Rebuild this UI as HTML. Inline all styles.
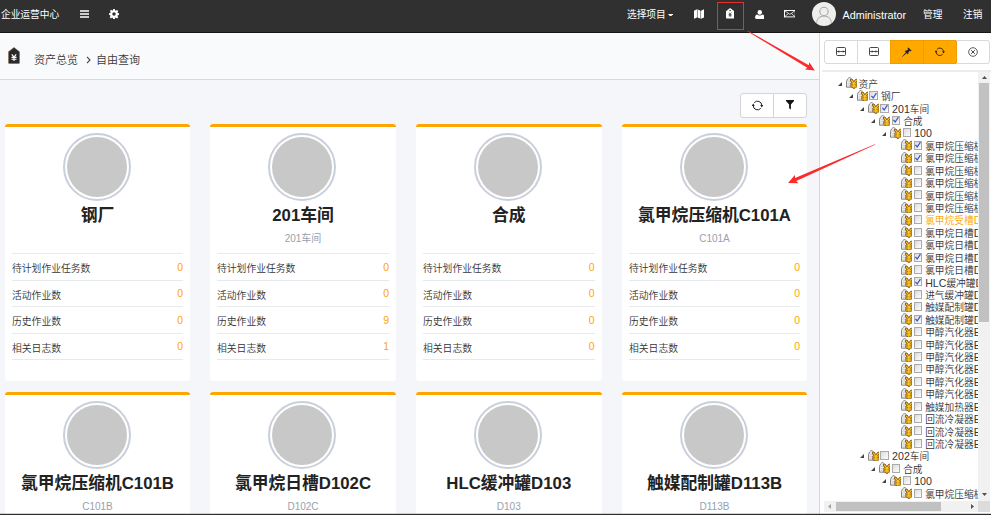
<!DOCTYPE html>
<html lang="zh-CN"><head><meta charset="utf-8"><title>企业运营中心</title><style>
*{box-sizing:border-box;margin:0;padding:0}
html,body{width:991px;height:515px;overflow:hidden;background:#f4f6fa;font-family:"Liberation Sans","Noto Sans CJK SC",sans-serif;color:#333}
body{position:relative}
.abs{position:absolute}
#nav{position:absolute;z-index:5;left:0;top:0;width:991px;height:33px;border-bottom:1px solid #161616;background:#303030;color:#fff;font-size:9.7px}
#nav .t{position:absolute;top:0.5px;height:28px;line-height:28px;white-space:nowrap}
#nav svg{position:absolute}
#hdr{position:absolute;left:0;top:32px;width:820px;height:48px;background:#f9fafc;border-bottom:1px solid #d6d8dc}
#hdr .bc{position:absolute;top:1px;height:54px;line-height:54px;font-size:11px;font-weight:350;color:#3a3a3a;white-space:nowrap}
.card{position:absolute;width:185.3px;height:257px;background:#fff;border-top:3px solid #ffa500;border-radius:3px}
.card .ring{position:absolute;left:58px;top:6px;width:68px;height:68px;border-radius:50%;border:2px solid #c9cfdb;padding:2px;background:#fff}
.card .ring i{display:block;width:60px;height:60px;border-radius:50%;background:#c8c8c8}
.card .tt{position:absolute;left:0;width:100%;top:76px;height:26px;line-height:26px;text-align:center;font-size:16.8px;font-weight:bold;color:#222;white-space:nowrap}
.card .st{position:absolute;left:0;width:100%;top:105px;height:14px;line-height:14px;text-align:center;font-size:10px;color:#98a1ab;white-space:nowrap}
.card ul{position:absolute;left:7px;right:7px;top:126px;list-style:none}
.card li{height:26.55px;line-height:30.5px;border-top:1px solid #e7eaec;font-size:9.8px;font-weight:350;color:#333;position:relative;white-space:nowrap}
.card li:last-child{border-bottom:1px solid #e7eaec;height:27.55px}
.card li b{position:absolute;right:0;top:-2.5px;font-weight:normal;color:#ffa500;font-size:10.5px}
#side{position:absolute;left:819px;top:32px;width:172px;height:483px;background:#fff;border-left:1px solid #d6d7da}
.tb{position:absolute;border:1px solid #d9d9d9;border-radius:3px;background:#fff}
.tb span{position:absolute;top:0;bottom:0;border-left:1px solid #d9d9d9}
.tb span.on{background:#ffa800;top:-1px;bottom:-1px;border:1px solid #f39c00;border-right:none}
#tree{position:absolute;left:1px;top:39px;width:158px;height:430px;overflow:hidden;font-size:9.7px;font-weight:350;color:#333}
.row{position:absolute;height:12.45px;line-height:12.45px;white-space:nowrap}
.row .sw{position:absolute;width:0;height:0;border-left:4px solid transparent;border-bottom:4px solid #444}
.row .cb{position:absolute;width:8.3px;height:9px;border:1px solid #aaa;background:linear-gradient(135deg,#dcdcdc,#fdfdfd);top:1.400px}
.row .tx{position:absolute;top:1.5px}
.row .tx b{font-weight:normal;font-size:10.6px;line-height:1px}
</style></head><body>

<div id="nav">
<span class="t" style="left:1px;letter-spacing:0">企业运营中心</span>
<svg style="left:80px;top:10px" width="9" height="8" viewBox="0 0 9 8"><path d="M0 0.9h9M0 4h9M0 7.1h9" stroke="#fff" stroke-width="1.5"/></svg>
<svg style="left:109px;top:9px" width="10" height="10" viewBox="0 0 20 20"><path fill="#fff" fill-rule="evenodd" d="M8.3 0h3.4l.5 2.7 1.6.7L16.1 1.8l2.4 2.4-1.6 2.3.7 1.6 2.7.5v3.4l-2.7.5-.7 1.6 1.6 2.3-2.4 2.4-2.3-1.6-1.6.7-.5 2.7H8.3l-.5-2.7-1.6-.7-2.3 1.6-2.4-2.4 1.6-2.3-.7-1.6L0 11.700V8.300l2.700-.5.7-1.6L1.800 3.900l2.400-2.400 2.300 1.600 1.600-.7zM10 6.500a3.500 3.500 0 100 7 3.500 3.500 0 000-7z"/></svg>
<span class="t" style="left:627px">选择项目</span>
<svg style="left:667.5px;top:13.5px" width="5.2" height="2.8" viewBox="0 0 6 3"><path d="M0 0h6L3 3z" fill="#fff"/></svg>
<svg style="left:693.8px;top:8.5px" width="10" height="10.2" viewBox="0 0 22 21"><path fill="#fff" d="M0 3l6.500-3v18l-6.500 3zM7.700 0l6.600 3v18l-6.600-3zM15.500 3l6.500-3v18l-6.500 3z"/></svg>
<div class="abs" style="left:717px;top:2px;width:27px;height:28px;border:1px solid #e8302c"></div>
<svg style="left:726px;top:8px" width="8.2" height="10.600" viewBox="0 0 17 22"><path fill="#fff" fill-rule="evenodd" d="M8.500 0L17 6.500V20.500a1.500 1.500 0 01-1.500 1.500h-14A1.500 1.500 0 010 20.500V6.500zM8.500 3.500a1.600 1.600 0 100 3.200 1.600 1.600 0 000-3.200z"/><path d="M6 9.500l2.500 3.500 2.500-3.500M5.500 13.500h6M5.500 16h6M8.500 13v5.500" stroke="#2f2f2f" stroke-width="1.500" fill="none"/></svg>
<svg style="left:754.8px;top:9.600px" width="9.600" height="9" viewBox="0 0 20 19"><path fill="#fff" d="M10 0a4.800 4.800 0 014.800 4.800c0 2.600-2 5.200-4.800 5.200S5.200 7.400 5.200 4.800A4.800 4.800 0 0110 0zM4.500 9.500c1.500 1.500 3.500 2.200 5.500 2.200s4-.7 5.500-2.200c3 .5 4.500 3 4.500 6.500 0 1.800-1.200 3-3 3H3c-1.800 0-3-1.200-3-3 0-3.500 1.500-6 4.500-6.500z"/></svg>
<svg style="left:783.5px;top:10.300px" width="11.800" height="7.400" viewBox="0 0 24 15"><rect x="1" y="1" width="22" height="13" fill="none" stroke="#fff" stroke-width="2"/><path d="M1 1l11 8 11-8M1 14l8-7M23 14l-8-7" fill="none" stroke="#fff" stroke-width="1.600"/></svg>
<div class="abs" style="left:812px;top:2px;width:24px;height:24px;border-radius:50%;background:#eeeeec;overflow:hidden"><svg style="left:0;top:0" width="24" height="24" viewBox="0 0 24 24"><circle cx="12" cy="9.500" r="4.200" fill="none" stroke="#a9a9a9" stroke-width="1.100"/><path d="M4.500 22c0-5 3.200-8 7.500-8s7.500 3 7.500 8" fill="none" stroke="#a9a9a9" stroke-width="1.100"/></svg></div>
<span class="t" style="left:842.5px;font-size:10.800px">Administrator</span>
<span class="t" style="left:923px">管理</span>
<span class="t" style="left:963px">注销</span>
</div>


<div id="hdr">
<svg class="abs" style="left:8px;top:15px" width="12" height="17" viewBox="0 0 12 17"><path d="M6 0.300L11.700 4.800V15.500a1.200 1.200 0 01-1.200 1.200h-9A1.200 1.200 0 01.3 15.500V4.800z" fill="#2a2a2a" stroke="#c9a37a" stroke-width="0.500"/><path d="M3.800 7.300L6 10.200 8.200 7.300M3.500 10.400h5M3.500 12.200h5M6 10v4" stroke="#fff" stroke-width="1.100" fill="none"/></svg>
<span class="bc" style="left:34px">资产总览</span>
<svg class="abs" style="left:86px;top:23.500px" width="5" height="8" viewBox="0 0 5 8"><path d="M1 0.800L4 4 1 7.200" fill="none" stroke="#444" stroke-width="1.100"/></svg>
<span class="bc" style="left:96px">自由查询</span>
</div>


<div class="tb" style="left:740px;top:93px;width:67px;height:24.5px;border-color:#d3d4d6">
<span style="left:32px;border-color:#d3d4d6"></span>
<svg class="abs" style="left:10.700px;top:5.600px" width="11" height="11" viewBox="0 0 22 22"><path d="M4.6 5.2A8.6 8.6 0 0 1 19.6 10.4M17.4 16.8A8.6 8.6 0 0 1 2.4 11.6" fill="none" stroke="#222" stroke-width="2"/><path d="M16.400 9.800h6.400l-3.200 5.200zM-0.800 12.200h6.400l-3.200-5.200z" fill="#222"/></svg>
<svg class="abs" style="left:45.300px;top:6px" width="8" height="9.500" viewBox="0 0 16 19"><path d="M0 0h16v2.200l-6.200 6.800V19l-3.600-2.600V9L0 2.200z" fill="#151515"/></svg>
</div>

<div class="card" style="left:5.0px;top:124.0px;width:185.0px"><div class="ring"><i></i></div><div class="tt">钢厂</div><div class="st"></div><ul><li>待计划作业任务数<b>0</b></li><li>活动作业数<b>0</b></li><li>历史作业数<b>0</b></li><li>相关日志数<b>0</b></li></ul></div>
<div class="card" style="left:210.0px;top:124.0px;width:186.0px"><div class="ring"><i></i></div><div class="tt">201车间</div><div class="st">201车间</div><ul><li>待计划作业任务数<b>0</b></li><li>活动作业数<b>0</b></li><li>历史作业数<b>9</b></li><li>相关日志数<b>1</b></li></ul></div>
<div class="card" style="left:416.0px;top:124.0px;width:185.5px"><div class="ring"><i></i></div><div class="tt">合成</div><div class="st"></div><ul><li>待计划作业任务数<b>0</b></li><li>活动作业数<b>0</b></li><li>历史作业数<b>0</b></li><li>相关日志数<b>0</b></li></ul></div>
<div class="card" style="left:622.0px;top:124.0px;width:185.0px"><div class="ring"><i></i></div><div class="tt">氯甲烷压缩机C101A</div><div class="st">C101A</div><ul><li>待计划作业任务数<b>0</b></li><li>活动作业数<b>0</b></li><li>历史作业数<b>0</b></li><li>相关日志数<b>0</b></li></ul></div>
<div class="card" style="left:5.0px;top:392.2px;width:185.0px"><div class="ring"><i></i></div><div class="tt">氯甲烷压缩机C101B</div><div class="st">C101B</div><ul><li>待计划作业任务数<b>0</b></li><li>活动作业数<b>0</b></li><li>历史作业数<b>0</b></li><li>相关日志数<b>0</b></li></ul></div>
<div class="card" style="left:210.0px;top:392.2px;width:186.0px"><div class="ring"><i></i></div><div class="tt">氯甲烷日槽D102C</div><div class="st">D102C</div><ul><li>待计划作业任务数<b>0</b></li><li>活动作业数<b>0</b></li><li>历史作业数<b>0</b></li><li>相关日志数<b>0</b></li></ul></div>
<div class="card" style="left:416.0px;top:392.2px;width:185.5px"><div class="ring"><i></i></div><div class="tt">HLC缓冲罐D103</div><div class="st">D103</div><ul><li>待计划作业任务数<b>0</b></li><li>活动作业数<b>0</b></li><li>历史作业数<b>0</b></li><li>相关日志数<b>0</b></li></ul></div>
<div class="card" style="left:622.0px;top:392.2px;width:185.0px"><div class="ring"><i></i></div><div class="tt">触媒配制罐D113B</div><div class="st">D113B</div><ul><li>待计划作业任务数<b>0</b></li><li>活动作业数<b>0</b></li><li>历史作业数<b>0</b></li><li>相关日志数<b>0</b></li></ul></div>

<div id="side">
<div class="tb" style="left:4px;top:8px;width:166px;height:24px">
<span style="left:-1px;width:33px;border:none"></span>
<span style="left:31.500px;width:33px"></span>
<span class="on" style="left:65px;width:32.500px"></span>
<span class="on" style="left:97.500px;width:33.500px"></span>
<span style="left:131px;width:36px;border-left-color:#f39c00"></span>
<svg class="abs" style="left:11px;top:6px" width="10" height="9" viewBox="0 0 20 18"><rect x="1" y="1" width="18" height="16" rx="2" fill="none" stroke="#333" stroke-width="1.800"/><path d="M1 9h18" stroke="#333" stroke-width="1.600"/><path d="M3 9l3.500-2.500v5zM17 9l-3.500-2.500v5z" fill="#333"/></svg>
<svg class="abs" style="left:44px;top:6px" width="10" height="9" viewBox="0 0 20 18"><rect x="1" y="1" width="18" height="16" rx="2" fill="none" stroke="#333" stroke-width="1.800"/><path d="M1 9h18" stroke="#333" stroke-width="1.600"/><path d="M9 9L5.500 6.500v5zM11 9l3.500-2.500v5z" fill="#333"/></svg>
<svg class="abs" style="left:77px;top:5.500px" width="10" height="10" viewBox="0 0 22 22"><path d="M14 1.500l6.500 6.500-1.800 1-1.700-.8-3.200 3.200c.4 1.800 0 3.200-1 4.200L9 11.800 1.200 21l-.2-.2L10.200 13 6.400 9.200c1-1 2.400-1.400 4.200-1L13.800 5 13 3.300z" fill="#1d2230" stroke="#1d2230" stroke-width="0.900"/></svg>
<svg class="abs" style="left:110px;top:5.500px" width="9.600" height="9.600" viewBox="0 0 22 22"><path d="M4.6 5.2A8.6 8.6 0 0 1 19.6 10.4M17.4 16.8A8.6 8.6 0 0 1 2.4 11.6" fill="none" stroke="#222" stroke-width="2"/><path d="M16.400 9.800h6.400l-3.200 5.200zM-0.800 12.200h6.400l-3.200-5.200z" fill="#222"/></svg>
<svg class="abs" style="left:142.600px;top:5.600px" width="10" height="10" viewBox="0 0 20 20"><circle cx="10" cy="10" r="8.600" fill="none" stroke="#333" stroke-width="1.600"/><path d="M6.300 6.300l7.400 7.400M13.700 6.300l-7.400 7.400" stroke="#333" stroke-width="1.800"/></svg>
</div>
<div class="abs" style="left:2px;top:38px;width:169px;height:1.500px;background:#ececec"></div>
<div id="tree">
<div class="row" style="left:0;top:6.30px;width:300px"><i class="sw" style="left:17.0px;top:4.6px"></i><svg class="ic" width="11" height="11.5" viewBox="0 0 11 11.5" style="left:25.0px;position:absolute;top:0.100px"><path d="M0.5 10.2V4.6C0.9 2.4 2.2 0.9 3.6 0.5C5 1 6.200 2.200 6.600 3.600V10.200z" fill="#e9e9e9" stroke="#6a6a6a" stroke-width="0.8"/><path d="M1.800 4.500h3M1.800 6.500h3M1.800 8.500h3" stroke="#c4c4c4" stroke-width="0.6"/><path d="M5.4 3.2L7.9 6.3L10.4 3.2M7.9 6.3V10.5M5.7 6.9H10.1M5.7 9H10.1" fill="none" stroke="#80500a" stroke-width="2.900" stroke-linecap="round" stroke-linejoin="round"/><path d="M5.4 3.2L7.9 6.3L10.4 3.2M7.9 6.3V10.5M5.7 6.9H10.1M5.7 9H10.1" fill="none" stroke="#fcc526" stroke-width="1.300" stroke-linecap="round" stroke-linejoin="round"/></svg><span class="tx" style="left:37.5px">资产</span></div>
<div class="row" style="left:0;top:18.72px;width:300px"><i class="sw" style="left:28.1px;top:4.6px"></i><svg class="ic" width="11" height="11.5" viewBox="0 0 11 11.5" style="left:36.0px;position:absolute;top:0.100px"><path d="M0.5 10.2V4.6C0.9 2.4 2.2 0.9 3.6 0.5C5 1 6.200 2.200 6.600 3.600V10.200z" fill="#e9e9e9" stroke="#6a6a6a" stroke-width="0.8"/><path d="M1.800 4.500h3M1.800 6.500h3M1.800 8.500h3" stroke="#c4c4c4" stroke-width="0.6"/><path d="M5.4 3.2L7.9 6.3L10.4 3.2M7.9 6.3V10.5M5.7 6.9H10.1M5.7 9H10.1" fill="none" stroke="#80500a" stroke-width="2.900" stroke-linecap="round" stroke-linejoin="round"/><path d="M5.4 3.2L7.9 6.3L10.4 3.2M7.9 6.3V10.5M5.7 6.9H10.1M5.7 9H10.1" fill="none" stroke="#fcc526" stroke-width="1.300" stroke-linecap="round" stroke-linejoin="round"/></svg><i class="cb" style="left:48.4px"><svg width="8" height="8" viewBox="0 0 8 8" style="position:absolute;left:-0.5px;top:-0.5px"><path d="M1.4 3.8L3.2 6 6.4 1.2" fill="none" stroke="#3f58c6" stroke-width="1.300"/></svg></i><span class="tx" style="left:60.0px">钢厂</span></div>
<div class="row" style="left:0;top:31.14px;width:300px"><i class="sw" style="left:39.1px;top:4.6px"></i><svg class="ic" width="11" height="11.5" viewBox="0 0 11 11.5" style="left:47.1px;position:absolute;top:0.100px"><path d="M0.5 10.2V4.6C0.9 2.4 2.2 0.9 3.6 0.5C5 1 6.200 2.200 6.600 3.600V10.200z" fill="#e9e9e9" stroke="#6a6a6a" stroke-width="0.8"/><path d="M1.800 4.500h3M1.800 6.500h3M1.800 8.500h3" stroke="#c4c4c4" stroke-width="0.6"/><path d="M5.4 3.2L7.9 6.3L10.4 3.2M7.9 6.3V10.5M5.7 6.9H10.1M5.7 9H10.1" fill="none" stroke="#80500a" stroke-width="2.900" stroke-linecap="round" stroke-linejoin="round"/><path d="M5.4 3.2L7.9 6.3L10.4 3.2M7.9 6.3V10.5M5.7 6.9H10.1M5.7 9H10.1" fill="none" stroke="#fcc526" stroke-width="1.300" stroke-linecap="round" stroke-linejoin="round"/></svg><i class="cb" style="left:59.4px"><svg width="8" height="8" viewBox="0 0 8 8" style="position:absolute;left:-0.5px;top:-0.5px"><path d="M1.4 3.8L3.2 6 6.4 1.2" fill="none" stroke="#3f58c6" stroke-width="1.300"/></svg></i><span class="tx" style="left:71.1px"><b>201</b>车间</span></div>
<div class="row" style="left:0;top:43.56px;width:300px"><i class="sw" style="left:50.2px;top:4.6px"></i><svg class="ic" width="11" height="11.5" viewBox="0 0 11 11.5" style="left:58.2px;position:absolute;top:0.100px"><path d="M0.5 10.2V4.6C0.9 2.4 2.2 0.9 3.6 0.5C5 1 6.200 2.200 6.600 3.600V10.200z" fill="#e9e9e9" stroke="#6a6a6a" stroke-width="0.8"/><path d="M1.800 4.500h3M1.800 6.500h3M1.800 8.500h3" stroke="#c4c4c4" stroke-width="0.6"/><path d="M5.4 3.2L7.9 6.3L10.4 3.2M7.9 6.3V10.5M5.7 6.9H10.1M5.7 9H10.1" fill="none" stroke="#80500a" stroke-width="2.900" stroke-linecap="round" stroke-linejoin="round"/><path d="M5.4 3.2L7.9 6.3L10.4 3.2M7.9 6.3V10.5M5.7 6.9H10.1M5.7 9H10.1" fill="none" stroke="#fcc526" stroke-width="1.300" stroke-linecap="round" stroke-linejoin="round"/></svg><i class="cb" style="left:70.5px"><svg width="8" height="8" viewBox="0 0 8 8" style="position:absolute;left:-0.5px;top:-0.5px"><path d="M1.4 3.8L3.2 6 6.4 1.2" fill="none" stroke="#3f58c6" stroke-width="1.300"/></svg></i><span class="tx" style="left:82.2px">合成</span></div>
<div class="row" style="left:0;top:55.98px;width:300px"><i class="sw" style="left:61.2px;top:4.6px"></i><svg class="ic" width="11" height="11.5" viewBox="0 0 11 11.5" style="left:69.2px;position:absolute;top:0.100px"><path d="M0.5 10.2V4.6C0.9 2.4 2.2 0.9 3.6 0.5C5 1 6.200 2.200 6.600 3.600V10.200z" fill="#e9e9e9" stroke="#6a6a6a" stroke-width="0.8"/><path d="M1.800 4.500h3M1.800 6.500h3M1.800 8.500h3" stroke="#c4c4c4" stroke-width="0.6"/><path d="M5.4 3.2L7.9 6.3L10.4 3.2M7.9 6.3V10.5M5.7 6.9H10.1M5.7 9H10.1" fill="none" stroke="#80500a" stroke-width="2.900" stroke-linecap="round" stroke-linejoin="round"/><path d="M5.4 3.2L7.9 6.3L10.4 3.2M7.9 6.3V10.5M5.7 6.9H10.1M5.7 9H10.1" fill="none" stroke="#fcc526" stroke-width="1.300" stroke-linecap="round" stroke-linejoin="round"/></svg><i class="cb" style="left:81.5px"></i><span class="tx" style="left:93.2px"><b>100</b></span></div>
<div class="row" style="left:0;top:68.40px;width:300px"><svg class="ic" width="11" height="11.5" viewBox="0 0 11 11.5" style="left:80.2px;position:absolute;top:0.100px"><path d="M0.5 10.2V4.6C0.9 2.4 2.2 0.9 3.6 0.5C5 1 6.200 2.200 6.600 3.600V10.200z" fill="#e9e9e9" stroke="#6a6a6a" stroke-width="0.8"/><path d="M1.800 4.500h3M1.800 6.500h3M1.800 8.500h3" stroke="#c4c4c4" stroke-width="0.6"/><path d="M5.4 3.2L7.9 6.3L10.4 3.2M7.9 6.3V10.5M5.7 6.9H10.1M5.7 9H10.1" fill="none" stroke="#80500a" stroke-width="2.900" stroke-linecap="round" stroke-linejoin="round"/><path d="M5.4 3.2L7.9 6.3L10.4 3.2M7.9 6.3V10.5M5.7 6.9H10.1M5.7 9H10.1" fill="none" stroke="#fcc526" stroke-width="1.300" stroke-linecap="round" stroke-linejoin="round"/></svg><i class="cb" style="left:92.5px"><svg width="8" height="8" viewBox="0 0 8 8" style="position:absolute;left:-0.5px;top:-0.5px"><path d="M1.4 3.8L3.2 6 6.4 1.2" fill="none" stroke="#3f58c6" stroke-width="1.300"/></svg></i><span class="tx" style="left:104.2px">氯甲烷压缩机<b>C101A</b></span></div>
<div class="row" style="left:0;top:80.82px;width:300px"><svg class="ic" width="11" height="11.5" viewBox="0 0 11 11.5" style="left:80.2px;position:absolute;top:0.100px"><path d="M0.5 10.2V4.6C0.9 2.4 2.2 0.9 3.6 0.5C5 1 6.200 2.200 6.600 3.600V10.200z" fill="#e9e9e9" stroke="#6a6a6a" stroke-width="0.8"/><path d="M1.800 4.500h3M1.800 6.500h3M1.800 8.500h3" stroke="#c4c4c4" stroke-width="0.6"/><path d="M5.4 3.2L7.9 6.3L10.4 3.2M7.9 6.3V10.5M5.7 6.9H10.1M5.7 9H10.1" fill="none" stroke="#80500a" stroke-width="2.900" stroke-linecap="round" stroke-linejoin="round"/><path d="M5.4 3.2L7.9 6.3L10.4 3.2M7.9 6.3V10.5M5.7 6.9H10.1M5.7 9H10.1" fill="none" stroke="#fcc526" stroke-width="1.300" stroke-linecap="round" stroke-linejoin="round"/></svg><i class="cb" style="left:92.5px"><svg width="8" height="8" viewBox="0 0 8 8" style="position:absolute;left:-0.5px;top:-0.5px"><path d="M1.4 3.8L3.2 6 6.4 1.2" fill="none" stroke="#3f58c6" stroke-width="1.300"/></svg></i><span class="tx" style="left:104.2px">氯甲烷压缩机<b>C101B</b></span></div>
<div class="row" style="left:0;top:93.24px;width:300px"><svg class="ic" width="11" height="11.5" viewBox="0 0 11 11.5" style="left:80.2px;position:absolute;top:0.100px"><path d="M0.5 10.2V4.6C0.9 2.4 2.2 0.9 3.6 0.5C5 1 6.200 2.200 6.600 3.600V10.200z" fill="#e9e9e9" stroke="#6a6a6a" stroke-width="0.8"/><path d="M1.800 4.500h3M1.800 6.500h3M1.800 8.500h3" stroke="#c4c4c4" stroke-width="0.6"/><path d="M5.4 3.2L7.9 6.3L10.4 3.2M7.9 6.3V10.5M5.7 6.9H10.1M5.7 9H10.1" fill="none" stroke="#80500a" stroke-width="2.900" stroke-linecap="round" stroke-linejoin="round"/><path d="M5.4 3.2L7.9 6.3L10.4 3.2M7.9 6.3V10.5M5.7 6.9H10.1M5.7 9H10.1" fill="none" stroke="#fcc526" stroke-width="1.300" stroke-linecap="round" stroke-linejoin="round"/></svg><i class="cb" style="left:92.5px"></i><span class="tx" style="left:104.2px">氯甲烷压缩机<b>C101C</b></span></div>
<div class="row" style="left:0;top:105.66px;width:300px"><svg class="ic" width="11" height="11.5" viewBox="0 0 11 11.5" style="left:80.2px;position:absolute;top:0.100px"><path d="M0.5 10.2V4.6C0.9 2.4 2.2 0.9 3.6 0.5C5 1 6.200 2.200 6.600 3.600V10.200z" fill="#e9e9e9" stroke="#6a6a6a" stroke-width="0.8"/><path d="M1.800 4.500h3M1.800 6.500h3M1.800 8.500h3" stroke="#c4c4c4" stroke-width="0.6"/><path d="M5.4 3.2L7.9 6.3L10.4 3.2M7.9 6.3V10.5M5.7 6.9H10.1M5.7 9H10.1" fill="none" stroke="#80500a" stroke-width="2.900" stroke-linecap="round" stroke-linejoin="round"/><path d="M5.4 3.2L7.9 6.3L10.4 3.2M7.9 6.3V10.5M5.7 6.9H10.1M5.7 9H10.1" fill="none" stroke="#fcc526" stroke-width="1.300" stroke-linecap="round" stroke-linejoin="round"/></svg><i class="cb" style="left:92.5px"></i><span class="tx" style="left:104.2px">氯甲烷压缩机<b>C101D</b></span></div>
<div class="row" style="left:0;top:118.08px;width:300px"><svg class="ic" width="11" height="11.5" viewBox="0 0 11 11.5" style="left:80.2px;position:absolute;top:0.100px"><path d="M0.5 10.2V4.6C0.9 2.4 2.2 0.9 3.6 0.5C5 1 6.200 2.200 6.600 3.600V10.200z" fill="#e9e9e9" stroke="#6a6a6a" stroke-width="0.8"/><path d="M1.800 4.500h3M1.800 6.500h3M1.800 8.500h3" stroke="#c4c4c4" stroke-width="0.6"/><path d="M5.4 3.2L7.9 6.3L10.4 3.2M7.9 6.3V10.5M5.7 6.9H10.1M5.7 9H10.1" fill="none" stroke="#80500a" stroke-width="2.900" stroke-linecap="round" stroke-linejoin="round"/><path d="M5.4 3.2L7.9 6.3L10.4 3.2M7.9 6.3V10.5M5.7 6.9H10.1M5.7 9H10.1" fill="none" stroke="#fcc526" stroke-width="1.300" stroke-linecap="round" stroke-linejoin="round"/></svg><i class="cb" style="left:92.5px"></i><span class="tx" style="left:104.2px">氯甲烷压缩机<b>C101E</b></span></div>
<div class="row" style="left:0;top:130.50px;width:300px"><svg class="ic" width="11" height="11.5" viewBox="0 0 11 11.5" style="left:80.2px;position:absolute;top:0.100px"><path d="M0.5 10.2V4.6C0.9 2.4 2.2 0.9 3.6 0.5C5 1 6.200 2.200 6.600 3.600V10.200z" fill="#e9e9e9" stroke="#6a6a6a" stroke-width="0.8"/><path d="M1.800 4.500h3M1.800 6.500h3M1.800 8.500h3" stroke="#c4c4c4" stroke-width="0.6"/><path d="M5.4 3.2L7.9 6.3L10.4 3.2M7.9 6.3V10.5M5.7 6.9H10.1M5.7 9H10.1" fill="none" stroke="#80500a" stroke-width="2.900" stroke-linecap="round" stroke-linejoin="round"/><path d="M5.4 3.2L7.9 6.3L10.4 3.2M7.9 6.3V10.5M5.7 6.9H10.1M5.7 9H10.1" fill="none" stroke="#fcc526" stroke-width="1.300" stroke-linecap="round" stroke-linejoin="round"/></svg><i class="cb" style="left:92.5px"></i><span class="tx" style="left:104.2px">氯甲烷压缩机<b>C101F</b></span></div>
<div class="row" style="left:0;top:142.92px;width:300px"><svg class="ic" width="11" height="11.5" viewBox="0 0 11 11.5" style="left:80.2px;position:absolute;top:0.100px"><path d="M0.5 10.2V4.6C0.9 2.4 2.2 0.9 3.6 0.5C5 1 6.200 2.200 6.600 3.600V10.200z" fill="#e9e9e9" stroke="#6a6a6a" stroke-width="0.8"/><path d="M1.800 4.500h3M1.800 6.500h3M1.800 8.500h3" stroke="#c4c4c4" stroke-width="0.6"/><path d="M5.4 3.2L7.9 6.3L10.4 3.2M7.9 6.3V10.5M5.7 6.9H10.1M5.7 9H10.1" fill="none" stroke="#80500a" stroke-width="2.900" stroke-linecap="round" stroke-linejoin="round"/><path d="M5.4 3.2L7.9 6.3L10.4 3.2M7.9 6.3V10.5M5.7 6.9H10.1M5.7 9H10.1" fill="none" stroke="#fcc526" stroke-width="1.300" stroke-linecap="round" stroke-linejoin="round"/></svg><i class="cb" style="left:92.5px"></i><span class="tx" style="left:104.2px;color:#ffa500">氯甲烷受槽<b>D101</b></span></div>
<div class="row" style="left:0;top:155.34px;width:300px"><svg class="ic" width="11" height="11.5" viewBox="0 0 11 11.5" style="left:80.2px;position:absolute;top:0.100px"><path d="M0.5 10.2V4.6C0.9 2.4 2.2 0.9 3.6 0.5C5 1 6.200 2.200 6.600 3.600V10.200z" fill="#e9e9e9" stroke="#6a6a6a" stroke-width="0.8"/><path d="M1.800 4.500h3M1.800 6.500h3M1.800 8.500h3" stroke="#c4c4c4" stroke-width="0.6"/><path d="M5.4 3.2L7.9 6.3L10.4 3.2M7.9 6.3V10.5M5.7 6.9H10.1M5.7 9H10.1" fill="none" stroke="#80500a" stroke-width="2.900" stroke-linecap="round" stroke-linejoin="round"/><path d="M5.4 3.2L7.9 6.3L10.4 3.2M7.9 6.3V10.5M5.7 6.9H10.1M5.7 9H10.1" fill="none" stroke="#fcc526" stroke-width="1.300" stroke-linecap="round" stroke-linejoin="round"/></svg><i class="cb" style="left:92.5px"></i><span class="tx" style="left:104.2px">氯甲烷日槽<b>D102A</b></span></div>
<div class="row" style="left:0;top:167.76px;width:300px"><svg class="ic" width="11" height="11.5" viewBox="0 0 11 11.5" style="left:80.2px;position:absolute;top:0.100px"><path d="M0.5 10.2V4.6C0.9 2.4 2.2 0.9 3.6 0.5C5 1 6.200 2.200 6.600 3.600V10.200z" fill="#e9e9e9" stroke="#6a6a6a" stroke-width="0.8"/><path d="M1.800 4.500h3M1.800 6.500h3M1.800 8.500h3" stroke="#c4c4c4" stroke-width="0.6"/><path d="M5.4 3.2L7.9 6.3L10.4 3.2M7.9 6.3V10.5M5.7 6.9H10.1M5.7 9H10.1" fill="none" stroke="#80500a" stroke-width="2.900" stroke-linecap="round" stroke-linejoin="round"/><path d="M5.4 3.2L7.9 6.3L10.4 3.2M7.9 6.3V10.5M5.7 6.9H10.1M5.7 9H10.1" fill="none" stroke="#fcc526" stroke-width="1.300" stroke-linecap="round" stroke-linejoin="round"/></svg><i class="cb" style="left:92.5px"></i><span class="tx" style="left:104.2px">氯甲烷日槽<b>D102B</b></span></div>
<div class="row" style="left:0;top:180.18px;width:300px"><svg class="ic" width="11" height="11.5" viewBox="0 0 11 11.5" style="left:80.2px;position:absolute;top:0.100px"><path d="M0.5 10.2V4.6C0.9 2.4 2.2 0.9 3.6 0.5C5 1 6.200 2.200 6.600 3.600V10.200z" fill="#e9e9e9" stroke="#6a6a6a" stroke-width="0.8"/><path d="M1.800 4.500h3M1.800 6.500h3M1.800 8.500h3" stroke="#c4c4c4" stroke-width="0.6"/><path d="M5.4 3.2L7.9 6.3L10.4 3.2M7.9 6.3V10.5M5.7 6.9H10.1M5.7 9H10.1" fill="none" stroke="#80500a" stroke-width="2.900" stroke-linecap="round" stroke-linejoin="round"/><path d="M5.4 3.2L7.9 6.3L10.4 3.2M7.9 6.3V10.5M5.7 6.9H10.1M5.7 9H10.1" fill="none" stroke="#fcc526" stroke-width="1.300" stroke-linecap="round" stroke-linejoin="round"/></svg><i class="cb" style="left:92.5px"><svg width="8" height="8" viewBox="0 0 8 8" style="position:absolute;left:-0.5px;top:-0.5px"><path d="M1.4 3.8L3.2 6 6.4 1.2" fill="none" stroke="#3f58c6" stroke-width="1.300"/></svg></i><span class="tx" style="left:104.2px">氯甲烷日槽<b>D102C</b></span></div>
<div class="row" style="left:0;top:192.60px;width:300px"><svg class="ic" width="11" height="11.5" viewBox="0 0 11 11.5" style="left:80.2px;position:absolute;top:0.100px"><path d="M0.5 10.2V4.6C0.9 2.4 2.2 0.9 3.6 0.5C5 1 6.200 2.200 6.600 3.600V10.200z" fill="#e9e9e9" stroke="#6a6a6a" stroke-width="0.8"/><path d="M1.800 4.500h3M1.800 6.500h3M1.800 8.500h3" stroke="#c4c4c4" stroke-width="0.6"/><path d="M5.4 3.2L7.9 6.3L10.4 3.2M7.9 6.3V10.5M5.7 6.9H10.1M5.7 9H10.1" fill="none" stroke="#80500a" stroke-width="2.900" stroke-linecap="round" stroke-linejoin="round"/><path d="M5.4 3.2L7.9 6.3L10.4 3.2M7.9 6.3V10.5M5.7 6.9H10.1M5.7 9H10.1" fill="none" stroke="#fcc526" stroke-width="1.300" stroke-linecap="round" stroke-linejoin="round"/></svg><i class="cb" style="left:92.5px"></i><span class="tx" style="left:104.2px">氯甲烷日槽<b>D102D</b></span></div>
<div class="row" style="left:0;top:205.02px;width:300px"><svg class="ic" width="11" height="11.5" viewBox="0 0 11 11.5" style="left:80.2px;position:absolute;top:0.100px"><path d="M0.5 10.2V4.6C0.9 2.4 2.2 0.9 3.6 0.5C5 1 6.200 2.200 6.600 3.600V10.200z" fill="#e9e9e9" stroke="#6a6a6a" stroke-width="0.8"/><path d="M1.800 4.500h3M1.800 6.500h3M1.800 8.500h3" stroke="#c4c4c4" stroke-width="0.6"/><path d="M5.4 3.2L7.9 6.3L10.4 3.2M7.9 6.3V10.5M5.7 6.9H10.1M5.7 9H10.1" fill="none" stroke="#80500a" stroke-width="2.900" stroke-linecap="round" stroke-linejoin="round"/><path d="M5.4 3.2L7.9 6.3L10.4 3.2M7.9 6.3V10.5M5.7 6.9H10.1M5.7 9H10.1" fill="none" stroke="#fcc526" stroke-width="1.300" stroke-linecap="round" stroke-linejoin="round"/></svg><i class="cb" style="left:92.5px"><svg width="8" height="8" viewBox="0 0 8 8" style="position:absolute;left:-0.5px;top:-0.5px"><path d="M1.4 3.8L3.2 6 6.4 1.2" fill="none" stroke="#3f58c6" stroke-width="1.300"/></svg></i><span class="tx" style="left:104.2px"><b>HLC</b>缓冲罐<b>D103</b></span></div>
<div class="row" style="left:0;top:217.44px;width:300px"><svg class="ic" width="11" height="11.5" viewBox="0 0 11 11.5" style="left:80.2px;position:absolute;top:0.100px"><path d="M0.5 10.2V4.6C0.9 2.4 2.2 0.9 3.6 0.5C5 1 6.200 2.200 6.600 3.600V10.200z" fill="#e9e9e9" stroke="#6a6a6a" stroke-width="0.8"/><path d="M1.800 4.500h3M1.800 6.500h3M1.800 8.500h3" stroke="#c4c4c4" stroke-width="0.6"/><path d="M5.4 3.2L7.9 6.3L10.4 3.2M7.9 6.3V10.5M5.7 6.9H10.1M5.7 9H10.1" fill="none" stroke="#80500a" stroke-width="2.900" stroke-linecap="round" stroke-linejoin="round"/><path d="M5.4 3.2L7.9 6.3L10.4 3.2M7.9 6.3V10.5M5.7 6.9H10.1M5.7 9H10.1" fill="none" stroke="#fcc526" stroke-width="1.300" stroke-linecap="round" stroke-linejoin="round"/></svg><i class="cb" style="left:92.5px"></i><span class="tx" style="left:104.2px">进气缓冲罐<b>D104</b></span></div>
<div class="row" style="left:0;top:229.86px;width:300px"><svg class="ic" width="11" height="11.5" viewBox="0 0 11 11.5" style="left:80.2px;position:absolute;top:0.100px"><path d="M0.5 10.2V4.6C0.9 2.4 2.2 0.9 3.6 0.5C5 1 6.200 2.200 6.600 3.600V10.200z" fill="#e9e9e9" stroke="#6a6a6a" stroke-width="0.8"/><path d="M1.800 4.500h3M1.800 6.500h3M1.800 8.500h3" stroke="#c4c4c4" stroke-width="0.6"/><path d="M5.4 3.2L7.9 6.3L10.4 3.2M7.9 6.3V10.5M5.7 6.9H10.1M5.7 9H10.1" fill="none" stroke="#80500a" stroke-width="2.900" stroke-linecap="round" stroke-linejoin="round"/><path d="M5.4 3.2L7.9 6.3L10.4 3.2M7.9 6.3V10.5M5.7 6.9H10.1M5.7 9H10.1" fill="none" stroke="#fcc526" stroke-width="1.300" stroke-linecap="round" stroke-linejoin="round"/></svg><i class="cb" style="left:92.5px"></i><span class="tx" style="left:104.2px">触媒配制罐<b>D113A</b></span></div>
<div class="row" style="left:0;top:242.28px;width:300px"><svg class="ic" width="11" height="11.5" viewBox="0 0 11 11.5" style="left:80.2px;position:absolute;top:0.100px"><path d="M0.5 10.2V4.6C0.9 2.4 2.2 0.9 3.6 0.5C5 1 6.200 2.200 6.600 3.600V10.200z" fill="#e9e9e9" stroke="#6a6a6a" stroke-width="0.8"/><path d="M1.800 4.500h3M1.800 6.500h3M1.800 8.500h3" stroke="#c4c4c4" stroke-width="0.6"/><path d="M5.4 3.2L7.9 6.3L10.4 3.2M7.9 6.3V10.5M5.7 6.9H10.1M5.7 9H10.1" fill="none" stroke="#80500a" stroke-width="2.900" stroke-linecap="round" stroke-linejoin="round"/><path d="M5.4 3.2L7.9 6.3L10.4 3.2M7.9 6.3V10.5M5.7 6.9H10.1M5.7 9H10.1" fill="none" stroke="#fcc526" stroke-width="1.300" stroke-linecap="round" stroke-linejoin="round"/></svg><i class="cb" style="left:92.5px"><svg width="8" height="8" viewBox="0 0 8 8" style="position:absolute;left:-0.5px;top:-0.5px"><path d="M1.4 3.8L3.2 6 6.4 1.2" fill="none" stroke="#3f58c6" stroke-width="1.300"/></svg></i><span class="tx" style="left:104.2px">触媒配制罐<b>D113B</b></span></div>
<div class="row" style="left:0;top:254.70px;width:300px"><svg class="ic" width="11" height="11.5" viewBox="0 0 11 11.5" style="left:80.2px;position:absolute;top:0.100px"><path d="M0.5 10.2V4.6C0.9 2.4 2.2 0.9 3.6 0.5C5 1 6.200 2.200 6.600 3.600V10.200z" fill="#e9e9e9" stroke="#6a6a6a" stroke-width="0.8"/><path d="M1.800 4.500h3M1.800 6.500h3M1.800 8.500h3" stroke="#c4c4c4" stroke-width="0.6"/><path d="M5.4 3.2L7.9 6.3L10.4 3.2M7.9 6.3V10.5M5.7 6.9H10.1M5.7 9H10.1" fill="none" stroke="#80500a" stroke-width="2.900" stroke-linecap="round" stroke-linejoin="round"/><path d="M5.4 3.2L7.9 6.3L10.4 3.2M7.9 6.3V10.5M5.7 6.9H10.1M5.7 9H10.1" fill="none" stroke="#fcc526" stroke-width="1.300" stroke-linecap="round" stroke-linejoin="round"/></svg><i class="cb" style="left:92.5px"></i><span class="tx" style="left:104.2px">甲醇汽化器<b>E101A</b></span></div>
<div class="row" style="left:0;top:267.12px;width:300px"><svg class="ic" width="11" height="11.5" viewBox="0 0 11 11.5" style="left:80.2px;position:absolute;top:0.100px"><path d="M0.5 10.2V4.6C0.9 2.4 2.2 0.9 3.6 0.5C5 1 6.200 2.200 6.600 3.600V10.200z" fill="#e9e9e9" stroke="#6a6a6a" stroke-width="0.8"/><path d="M1.800 4.500h3M1.800 6.500h3M1.800 8.500h3" stroke="#c4c4c4" stroke-width="0.6"/><path d="M5.4 3.2L7.9 6.3L10.4 3.2M7.9 6.3V10.5M5.7 6.9H10.1M5.7 9H10.1" fill="none" stroke="#80500a" stroke-width="2.900" stroke-linecap="round" stroke-linejoin="round"/><path d="M5.4 3.2L7.9 6.3L10.4 3.2M7.9 6.3V10.5M5.7 6.9H10.1M5.7 9H10.1" fill="none" stroke="#fcc526" stroke-width="1.300" stroke-linecap="round" stroke-linejoin="round"/></svg><i class="cb" style="left:92.5px"></i><span class="tx" style="left:104.2px">甲醇汽化器<b>E101B</b></span></div>
<div class="row" style="left:0;top:279.54px;width:300px"><svg class="ic" width="11" height="11.5" viewBox="0 0 11 11.5" style="left:80.2px;position:absolute;top:0.100px"><path d="M0.5 10.2V4.6C0.9 2.4 2.2 0.9 3.6 0.5C5 1 6.200 2.200 6.600 3.600V10.200z" fill="#e9e9e9" stroke="#6a6a6a" stroke-width="0.8"/><path d="M1.800 4.500h3M1.800 6.500h3M1.800 8.500h3" stroke="#c4c4c4" stroke-width="0.6"/><path d="M5.4 3.2L7.9 6.3L10.4 3.2M7.9 6.3V10.5M5.7 6.9H10.1M5.7 9H10.1" fill="none" stroke="#80500a" stroke-width="2.900" stroke-linecap="round" stroke-linejoin="round"/><path d="M5.4 3.2L7.9 6.3L10.4 3.2M7.9 6.3V10.5M5.7 6.9H10.1M5.7 9H10.1" fill="none" stroke="#fcc526" stroke-width="1.300" stroke-linecap="round" stroke-linejoin="round"/></svg><i class="cb" style="left:92.5px"></i><span class="tx" style="left:104.2px">甲醇汽化器<b>E101C</b></span></div>
<div class="row" style="left:0;top:291.96px;width:300px"><svg class="ic" width="11" height="11.5" viewBox="0 0 11 11.5" style="left:80.2px;position:absolute;top:0.100px"><path d="M0.5 10.2V4.6C0.9 2.4 2.2 0.9 3.6 0.5C5 1 6.200 2.200 6.600 3.600V10.200z" fill="#e9e9e9" stroke="#6a6a6a" stroke-width="0.8"/><path d="M1.800 4.500h3M1.800 6.500h3M1.800 8.500h3" stroke="#c4c4c4" stroke-width="0.6"/><path d="M5.4 3.2L7.9 6.3L10.4 3.2M7.9 6.3V10.5M5.7 6.9H10.1M5.7 9H10.1" fill="none" stroke="#80500a" stroke-width="2.900" stroke-linecap="round" stroke-linejoin="round"/><path d="M5.4 3.2L7.9 6.3L10.4 3.2M7.9 6.3V10.5M5.7 6.9H10.1M5.7 9H10.1" fill="none" stroke="#fcc526" stroke-width="1.300" stroke-linecap="round" stroke-linejoin="round"/></svg><i class="cb" style="left:92.5px"></i><span class="tx" style="left:104.2px">甲醇汽化器<b>E101D</b></span></div>
<div class="row" style="left:0;top:304.38px;width:300px"><svg class="ic" width="11" height="11.5" viewBox="0 0 11 11.5" style="left:80.2px;position:absolute;top:0.100px"><path d="M0.5 10.2V4.6C0.9 2.4 2.2 0.9 3.6 0.5C5 1 6.200 2.200 6.600 3.600V10.200z" fill="#e9e9e9" stroke="#6a6a6a" stroke-width="0.8"/><path d="M1.800 4.500h3M1.800 6.500h3M1.800 8.500h3" stroke="#c4c4c4" stroke-width="0.6"/><path d="M5.4 3.2L7.9 6.3L10.4 3.2M7.9 6.3V10.5M5.7 6.9H10.1M5.7 9H10.1" fill="none" stroke="#80500a" stroke-width="2.900" stroke-linecap="round" stroke-linejoin="round"/><path d="M5.4 3.2L7.9 6.3L10.4 3.2M7.9 6.3V10.5M5.7 6.9H10.1M5.7 9H10.1" fill="none" stroke="#fcc526" stroke-width="1.300" stroke-linecap="round" stroke-linejoin="round"/></svg><i class="cb" style="left:92.5px"></i><span class="tx" style="left:104.2px">甲醇汽化器<b>E101E</b></span></div>
<div class="row" style="left:0;top:316.80px;width:300px"><svg class="ic" width="11" height="11.5" viewBox="0 0 11 11.5" style="left:80.2px;position:absolute;top:0.100px"><path d="M0.5 10.2V4.6C0.9 2.4 2.2 0.9 3.6 0.5C5 1 6.200 2.200 6.600 3.600V10.200z" fill="#e9e9e9" stroke="#6a6a6a" stroke-width="0.8"/><path d="M1.800 4.500h3M1.800 6.500h3M1.800 8.500h3" stroke="#c4c4c4" stroke-width="0.6"/><path d="M5.4 3.2L7.9 6.3L10.4 3.2M7.9 6.3V10.5M5.7 6.9H10.1M5.7 9H10.1" fill="none" stroke="#80500a" stroke-width="2.900" stroke-linecap="round" stroke-linejoin="round"/><path d="M5.4 3.2L7.9 6.3L10.4 3.2M7.9 6.3V10.5M5.7 6.9H10.1M5.7 9H10.1" fill="none" stroke="#fcc526" stroke-width="1.300" stroke-linecap="round" stroke-linejoin="round"/></svg><i class="cb" style="left:92.5px"></i><span class="tx" style="left:104.2px">甲醇汽化器<b>E101F</b></span></div>
<div class="row" style="left:0;top:329.22px;width:300px"><svg class="ic" width="11" height="11.5" viewBox="0 0 11 11.5" style="left:80.2px;position:absolute;top:0.100px"><path d="M0.5 10.2V4.6C0.9 2.4 2.2 0.9 3.6 0.5C5 1 6.200 2.200 6.600 3.600V10.200z" fill="#e9e9e9" stroke="#6a6a6a" stroke-width="0.8"/><path d="M1.800 4.500h3M1.800 6.500h3M1.800 8.500h3" stroke="#c4c4c4" stroke-width="0.6"/><path d="M5.4 3.2L7.9 6.3L10.4 3.2M7.9 6.3V10.5M5.7 6.9H10.1M5.7 9H10.1" fill="none" stroke="#80500a" stroke-width="2.900" stroke-linecap="round" stroke-linejoin="round"/><path d="M5.4 3.2L7.9 6.3L10.4 3.2M7.9 6.3V10.5M5.7 6.9H10.1M5.7 9H10.1" fill="none" stroke="#fcc526" stroke-width="1.300" stroke-linecap="round" stroke-linejoin="round"/></svg><i class="cb" style="left:92.5px"></i><span class="tx" style="left:104.2px">触媒加热器<b>E102</b></span></div>
<div class="row" style="left:0;top:341.64px;width:300px"><svg class="ic" width="11" height="11.5" viewBox="0 0 11 11.5" style="left:80.2px;position:absolute;top:0.100px"><path d="M0.5 10.2V4.6C0.9 2.4 2.2 0.9 3.6 0.5C5 1 6.200 2.200 6.600 3.600V10.200z" fill="#e9e9e9" stroke="#6a6a6a" stroke-width="0.8"/><path d="M1.800 4.500h3M1.800 6.500h3M1.800 8.500h3" stroke="#c4c4c4" stroke-width="0.6"/><path d="M5.4 3.2L7.9 6.3L10.4 3.2M7.9 6.3V10.5M5.7 6.9H10.1M5.7 9H10.1" fill="none" stroke="#80500a" stroke-width="2.900" stroke-linecap="round" stroke-linejoin="round"/><path d="M5.4 3.2L7.9 6.3L10.4 3.2M7.9 6.3V10.5M5.7 6.9H10.1M5.7 9H10.1" fill="none" stroke="#fcc526" stroke-width="1.300" stroke-linecap="round" stroke-linejoin="round"/></svg><i class="cb" style="left:92.5px"></i><span class="tx" style="left:104.2px">回流冷凝器<b>E103A</b></span></div>
<div class="row" style="left:0;top:354.06px;width:300px"><svg class="ic" width="11" height="11.5" viewBox="0 0 11 11.5" style="left:80.2px;position:absolute;top:0.100px"><path d="M0.5 10.2V4.6C0.9 2.4 2.2 0.9 3.6 0.5C5 1 6.200 2.200 6.600 3.600V10.200z" fill="#e9e9e9" stroke="#6a6a6a" stroke-width="0.8"/><path d="M1.800 4.500h3M1.800 6.500h3M1.800 8.500h3" stroke="#c4c4c4" stroke-width="0.6"/><path d="M5.4 3.2L7.9 6.3L10.4 3.2M7.9 6.3V10.5M5.7 6.9H10.1M5.7 9H10.1" fill="none" stroke="#80500a" stroke-width="2.900" stroke-linecap="round" stroke-linejoin="round"/><path d="M5.4 3.2L7.9 6.3L10.4 3.2M7.9 6.3V10.5M5.7 6.9H10.1M5.7 9H10.1" fill="none" stroke="#fcc526" stroke-width="1.300" stroke-linecap="round" stroke-linejoin="round"/></svg><i class="cb" style="left:92.5px"></i><span class="tx" style="left:104.2px">回流冷凝器<b>E103B</b></span></div>
<div class="row" style="left:0;top:366.48px;width:300px"><svg class="ic" width="11" height="11.5" viewBox="0 0 11 11.5" style="left:80.2px;position:absolute;top:0.100px"><path d="M0.5 10.2V4.6C0.9 2.4 2.2 0.9 3.6 0.5C5 1 6.200 2.200 6.600 3.600V10.200z" fill="#e9e9e9" stroke="#6a6a6a" stroke-width="0.8"/><path d="M1.800 4.500h3M1.800 6.500h3M1.800 8.500h3" stroke="#c4c4c4" stroke-width="0.6"/><path d="M5.4 3.2L7.9 6.3L10.4 3.2M7.9 6.3V10.5M5.7 6.9H10.1M5.7 9H10.1" fill="none" stroke="#80500a" stroke-width="2.900" stroke-linecap="round" stroke-linejoin="round"/><path d="M5.4 3.2L7.9 6.3L10.4 3.2M7.9 6.3V10.5M5.7 6.9H10.1M5.7 9H10.1" fill="none" stroke="#fcc526" stroke-width="1.300" stroke-linecap="round" stroke-linejoin="round"/></svg><i class="cb" style="left:92.5px"></i><span class="tx" style="left:104.2px">回流冷凝器<b>E103C</b></span></div>
<div class="row" style="left:0;top:378.90px;width:300px"><i class="sw" style="left:39.1px;top:4.6px"></i><svg class="ic" width="11" height="11.5" viewBox="0 0 11 11.5" style="left:47.1px;position:absolute;top:0.100px"><path d="M0.5 10.2V4.6C0.9 2.4 2.2 0.9 3.6 0.5C5 1 6.200 2.200 6.600 3.600V10.200z" fill="#e9e9e9" stroke="#6a6a6a" stroke-width="0.8"/><path d="M1.800 4.500h3M1.800 6.500h3M1.800 8.500h3" stroke="#c4c4c4" stroke-width="0.6"/><path d="M5.4 3.2L7.9 6.3L10.4 3.2M7.9 6.3V10.5M5.7 6.9H10.1M5.7 9H10.1" fill="none" stroke="#80500a" stroke-width="2.900" stroke-linecap="round" stroke-linejoin="round"/><path d="M5.4 3.2L7.9 6.3L10.4 3.2M7.9 6.3V10.5M5.7 6.9H10.1M5.7 9H10.1" fill="none" stroke="#fcc526" stroke-width="1.300" stroke-linecap="round" stroke-linejoin="round"/></svg><i class="cb" style="left:59.4px"></i><span class="tx" style="left:71.1px"><b>202</b>车间</span></div>
<div class="row" style="left:0;top:391.32px;width:300px"><i class="sw" style="left:50.2px;top:4.6px"></i><svg class="ic" width="11" height="11.5" viewBox="0 0 11 11.5" style="left:58.2px;position:absolute;top:0.100px"><path d="M0.5 10.2V4.6C0.9 2.4 2.2 0.9 3.6 0.5C5 1 6.200 2.200 6.600 3.600V10.200z" fill="#e9e9e9" stroke="#6a6a6a" stroke-width="0.8"/><path d="M1.800 4.500h3M1.800 6.500h3M1.800 8.500h3" stroke="#c4c4c4" stroke-width="0.6"/><path d="M5.4 3.2L7.9 6.3L10.4 3.2M7.9 6.3V10.5M5.7 6.9H10.1M5.7 9H10.1" fill="none" stroke="#80500a" stroke-width="2.900" stroke-linecap="round" stroke-linejoin="round"/><path d="M5.4 3.2L7.9 6.3L10.4 3.2M7.9 6.3V10.5M5.7 6.9H10.1M5.7 9H10.1" fill="none" stroke="#fcc526" stroke-width="1.300" stroke-linecap="round" stroke-linejoin="round"/></svg><i class="cb" style="left:70.5px"></i><span class="tx" style="left:82.2px">合成</span></div>
<div class="row" style="left:0;top:403.74px;width:300px"><i class="sw" style="left:61.2px;top:4.6px"></i><svg class="ic" width="11" height="11.5" viewBox="0 0 11 11.5" style="left:69.2px;position:absolute;top:0.100px"><path d="M0.5 10.2V4.6C0.9 2.4 2.2 0.9 3.6 0.5C5 1 6.200 2.200 6.600 3.600V10.200z" fill="#e9e9e9" stroke="#6a6a6a" stroke-width="0.8"/><path d="M1.800 4.500h3M1.800 6.500h3M1.800 8.500h3" stroke="#c4c4c4" stroke-width="0.6"/><path d="M5.4 3.2L7.9 6.3L10.4 3.2M7.9 6.3V10.5M5.7 6.9H10.1M5.7 9H10.1" fill="none" stroke="#80500a" stroke-width="2.900" stroke-linecap="round" stroke-linejoin="round"/><path d="M5.4 3.2L7.9 6.3L10.4 3.2M7.9 6.3V10.5M5.7 6.9H10.1M5.7 9H10.1" fill="none" stroke="#fcc526" stroke-width="1.300" stroke-linecap="round" stroke-linejoin="round"/></svg><i class="cb" style="left:81.5px"></i><span class="tx" style="left:93.2px"><b>100</b></span></div>
<div class="row" style="left:0;top:416.16px;width:300px"><svg class="ic" width="11" height="11.5" viewBox="0 0 11 11.5" style="left:80.2px;position:absolute;top:0.100px"><path d="M0.5 10.2V4.6C0.9 2.4 2.2 0.9 3.6 0.5C5 1 6.200 2.200 6.600 3.600V10.200z" fill="#e9e9e9" stroke="#6a6a6a" stroke-width="0.8"/><path d="M1.800 4.500h3M1.800 6.500h3M1.800 8.500h3" stroke="#c4c4c4" stroke-width="0.6"/><path d="M5.4 3.2L7.9 6.3L10.4 3.2M7.9 6.3V10.5M5.7 6.9H10.1M5.7 9H10.1" fill="none" stroke="#80500a" stroke-width="2.900" stroke-linecap="round" stroke-linejoin="round"/><path d="M5.4 3.2L7.9 6.3L10.4 3.2M7.9 6.3V10.5M5.7 6.9H10.1M5.7 9H10.1" fill="none" stroke="#fcc526" stroke-width="1.300" stroke-linecap="round" stroke-linejoin="round"/></svg><i class="cb" style="left:92.5px"></i><span class="tx" style="left:104.2px">氯甲烷压缩机<b>C201A</b></span></div>
</div>
<!-- vertical scrollbar -->
<div class="abs" style="left:158px;top:40px;width:12px;height:429px;background:#f1f1f1"></div>
<div class="abs" style="left:159px;top:51px;width:10px;height:238.500px;background:#c1c1c1"></div>
<svg class="abs" style="left:161.500px;top:44px" width="5" height="3" viewBox="0 0 5 3"><path d="M0 3L2.500 0 5 3z" fill="#505050"/></svg>
<svg class="abs" style="left:161.500px;top:461px" width="5" height="3" viewBox="0 0 5 3"><path d="M0 0L2.500 3 5 0z" fill="#505050"/></svg>
<!-- horizontal scrollbar -->
<div class="abs" style="left:4px;top:469px;width:166px;height:11px;background:#f1f1f1"></div>
<div class="abs" style="left:158px;top:469px;width:12px;height:11px;background:#dcdcdc"></div>
<div class="abs" style="left:16px;top:470px;width:105px;height:9px;background:#c1c1c1"></div>
<svg class="abs" style="left:8px;top:472px" width="3" height="5" viewBox="0 0 3 5"><path d="M3 0L0 2.500 3 5z" fill="#a3a3a3"/></svg>
<svg class="abs" style="left:150.500px;top:472px" width="3" height="5" viewBox="0 0 3 5"><path d="M0 0L3 2.500 0 5z" fill="#505050"/></svg>
</div>


<svg class="abs" style="left:0;top:0;z-index:6;pointer-events:none" width="991" height="515" viewBox="0 0 991 515">
<path d="M747.4 31.3L807.3 67.7L805.1 69.6L814.8 70.4L809.3 62.3L808.8 65.2L747.8 30.7z" fill="#fb2a2c"/>
<path d="M874.8 144.3L795.1 178.1L794.8 175.1L788.1 182.9L798.4 183.2L796.3 181.0L875.0 144.7z" fill="#fb2a2c"/>
</svg>

<div class="abs" style="left:0;top:513px;width:991px;height:1px;background:rgba(45,45,45,0.2)"></div><div class="abs" style="left:0;top:514px;width:991px;height:1px;background:#2d2d2d"></div>
</body></html>
